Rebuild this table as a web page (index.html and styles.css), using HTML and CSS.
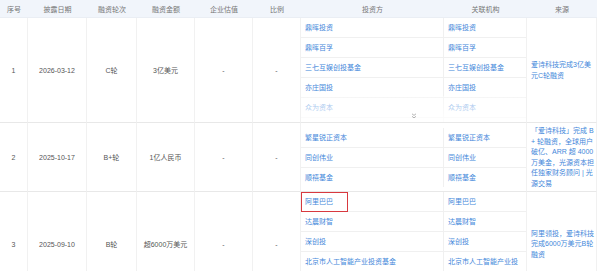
FILE: index.html
```html
<!DOCTYPE html>
<html lang="zh">
<head>
<meta charset="utf-8">
<link rel="stylesheet" href="styles.css">
</head>
<body>
<div class="tbl">
  <div class="th">序号</div>
  <div class="th">披露日期</div>
  <div class="th">融资轮次</div>
  <div class="th">融资金额</div>
  <div class="th">企业估值</div>
  <div class="th">比例</div>
  <div class="th">投资方</div>
  <div class="th">关联机构</div>
  <div class="th">来源</div>

  <div class="td">1</div>
  <div class="td">2026-03-12</div>
  <div class="td">C轮</div>
  <div class="td">3亿美元</div>
  <div class="td">-</div>
  <div class="td">-</div>
  <div class="td nest-cell">
    <div class="nest collapsed">
      <div class="sub"><div class="sc">鼎晖投资</div><div class="sc">鼎晖投资</div></div>
      <div class="sub"><div class="sc">鼎晖百孚</div><div class="sc">鼎晖百孚</div></div>
      <div class="sub"><div class="sc">三七互娱创投基金</div><div class="sc">三七互娱创投基金</div></div>
      <div class="sub"><div class="sc">亦庄国投</div><div class="sc">亦庄国投</div></div>
      <div class="sub"><div class="sc">众为资本</div><div class="sc">众为资本</div></div>
      <div class="sub"><div class="sc">&nbsp;</div><div class="sc">&nbsp;</div></div>
      <div class="fade"><svg class="chev" width="6" height="6" viewBox="0 0 6 6"><path d="M1 0.8 L3 2.4 L5 0.8 M1 3.3 L3 4.9 L5 3.3" fill="none" stroke="#a0a0a0" stroke-width="0.8"/></svg></div>
    </div>
  </div>
  <div class="td src"><span class="link">爱诗科技完成3亿美元C轮融资</span></div>

  <div class="td">2</div>
  <div class="td">2025-10-17</div>
  <div class="td">B+轮</div>
  <div class="td">1亿人民币</div>
  <div class="td">-</div>
  <div class="td">-</div>
  <div class="td nest-cell">
    <div class="nest">
      <div class="sub"><div class="sc">繁星锐正资本</div><div class="sc">繁星锐正资本</div></div>
      <div class="sub"><div class="sc">同创伟业</div><div class="sc">同创伟业</div></div>
      <div class="sub"><div class="sc">顺禧基金</div><div class="sc">顺禧基金</div></div>
    </div>
  </div>
  <div class="td src"><span class="link">「爱诗科技」完成 B + 轮融资，全球用户破亿、ARR 超 4000 万美金，光源资本担任独家财务顾问 | 光源交易</span></div>

  <div class="td">3</div>
  <div class="td">2025-09-10</div>
  <div class="td">B轮</div>
  <div class="td">超6000万美元</div>
  <div class="td">-</div>
  <div class="td">-</div>
  <div class="td nest-cell">
    <div class="nest collapsed">
      <div class="sub"><div class="sc"><span class="hl">阿里巴巴</span></div><div class="sc">阿里巴巴</div></div>
      <div class="sub"><div class="sc">达晨财智</div><div class="sc">达晨财智</div></div>
      <div class="sub"><div class="sc">深创投</div><div class="sc">深创投</div></div>
      <div class="sub"><div class="sc">北京市人工智能产业投资基金</div><div class="sc">北京市人工智能产业投资基金</div></div>
    </div>
  </div>
  <div class="td src"><span class="link">阿里领投，爱诗科技完成6000万美元B轮融资</span></div>
</div>
</body>
</html>
```
FILE: styles.css
```css
* { box-sizing: border-box; margin: 0; padding: 0; }
html, body { background: #fff; }
body {
  margin: 0;
  font-family: "Liberation Sans", "Noto Sans CJK SC", sans-serif;
  font-size: 7px;
  color: #555;
}
.tbl {
  display: grid;
  grid-template-columns: 28px 59px 50px 58px 58px 48px 143px 83px 70px;
  width: 597px;
}
.th {
  height: 18px;
  background: #f1f5fb;
  color: #777;
  display: flex;
  align-items: center;
  justify-content: center;
  border-bottom: 1px solid #eaeef4;
}
.td {
  border-right: 1px solid #f1f1f1;
  border-bottom: 1px solid #e8e8e8;
  display: flex;
  align-items: center;
  justify-content: center;
  color: #555;
  text-align: center;
}
.nest-cell {
  grid-column: span 2;
  padding: 0;
  align-items: center;
  justify-content: flex-start;
}
.nest {
  width: 100%;
  position: relative;
}
.nest.collapsed {
  height: 104px;
  overflow: hidden;
  align-self: flex-start;
}
.sub {
  display: grid;
  grid-template-columns: 143px 1fr;
  border-bottom: 1px solid #f0f0f0;
  text-align: left;
}
.sub:last-child { border-bottom: none; }
.sc {
  line-height: 19px;
  min-height: 19px;
  padding: 0 4px;
  color: #3f87da;
}
.sc:first-child { border-right: 1px solid #f0f0f0; }
.hl {
  display: inline-block;
  margin-left: -4px;
  padding: 0 14px 0 3px;
  height: 20px;
  line-height: 18px;
  margin-bottom: -1px;
  border: 1px solid #d8393f;
  vertical-align: top;
}
.fade {
  position: absolute;
  left: 0;
  right: 0;
  bottom: 0;
  height: 26px;
  background: linear-gradient(to bottom, rgba(255,255,255,0.35), rgba(255,255,255,0.85));
  display: flex;
  justify-content: center;
  align-items: flex-end;
  padding-bottom: 3px;
}
.chev { display: block; }
.src {
  justify-content: flex-start;
  text-align: left;
  padding: 3px 2px 2px 4px;
  line-height: 10.5px;
}
.link { color: #3f87da; }
```
